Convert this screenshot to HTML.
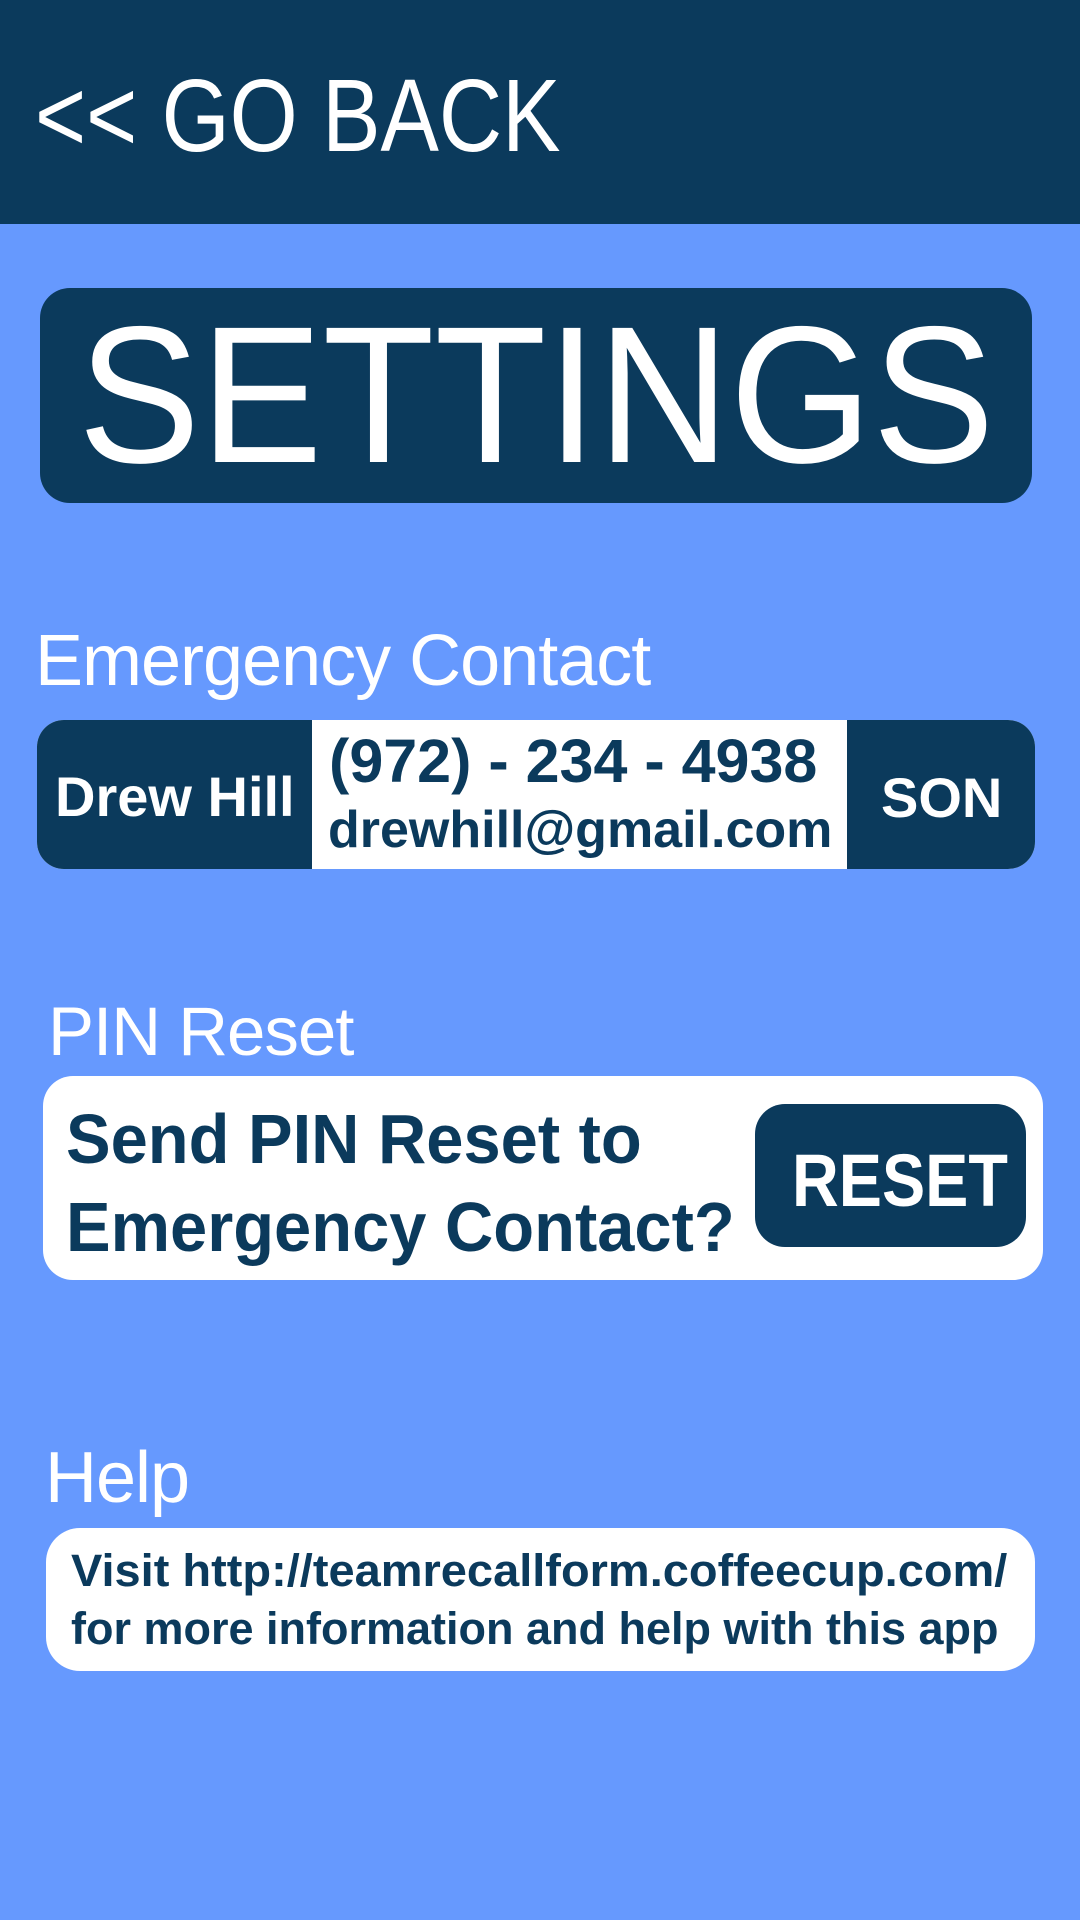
<!DOCTYPE html>
<html><head><meta charset="utf-8"><style>
*{margin:0;padding:0;box-sizing:border-box}
body{width:1080px;height:1920px;background:#6699fe;font-family:"Liberation Sans",sans-serif;position:relative;overflow:hidden}
.a{position:absolute}
.dark{background:#0b3a5c}
.thin{font-weight:300;color:#fff;white-space:nowrap;line-height:1}
.b{font-weight:bold;color:#0b3a5c;white-space:nowrap}
.sx{transform-origin:0 0}
</style></head><body>
<div class="a dark" style="left:0;top:0;width:1080px;height:224px"></div>
<div class="a thin sx" style="left:35px;top:64px;font-size:103px;transform:scaleX(0.85)">&lt;&lt; GO BACK</div>
<div class="a dark" style="left:40px;top:288px;width:992px;height:215px;border-radius:30px"></div>
<div class="a thin sx" style="left:78px;top:298px;font-size:195px;transform:scaleX(0.94)">SETTINGS</div>
<div class="a thin" style="left:35px;top:625px;font-size:72px;letter-spacing:-1px">Emergency Contact</div>
<div class="a" style="left:37px;top:720px;width:998px;height:149px;border-radius:27px;overflow:hidden;background:#fff">
 <div class="a dark" style="left:0;top:0;width:275px;height:149px"></div>
 <div class="a dark" style="left:810px;top:0;width:188px;height:149px"></div>
 <div class="a b" style="left:18px;top:44px;font-size:56px;color:#fff">Drew Hill</div>
 <div class="a b" style="left:292px;top:6px;font-size:61px">(972) - 234 - 4938</div>
 <div class="a b" style="left:291px;top:80px;font-size:52px">drewhill@gmail.com</div>
 <div class="a b" style="left:844px;top:45px;font-size:56px;color:#fff">SON</div>
</div>
<div class="a thin" style="left:48px;top:997px;font-size:69px;letter-spacing:-1px">PIN Reset</div>
<div class="a" style="left:43px;top:1076px;width:1000px;height:204px;border-radius:30px;background:#fff"></div>
<div class="a b sx" style="left:66px;top:1095px;font-size:70px;line-height:88px;transform:scaleX(0.955)">Send PIN Reset to<br>Emergency Contact?</div>
<div class="a dark" style="left:755px;top:1104px;width:271px;height:143px;border-radius:30px"></div>
<div class="a b sx" style="left:792px;top:1138px;font-size:74px;color:#fff;transform:scaleX(0.875)">RESET</div>
<div class="a thin" style="left:45px;top:1442px;font-size:72px;letter-spacing:-1px">Help</div>
<div class="a" style="left:46px;top:1528px;width:989px;height:143px;border-radius:34px;background:#fff"></div>
<div class="a b" style="left:71px;top:1542px;font-size:45px;line-height:58px"><span style="display:inline-block;transform:scaleX(1.044);transform-origin:0 0">Visit http://teamrecallform.coffeecup.com/</span><br>for more information and help with this app</div>
</body></html>
